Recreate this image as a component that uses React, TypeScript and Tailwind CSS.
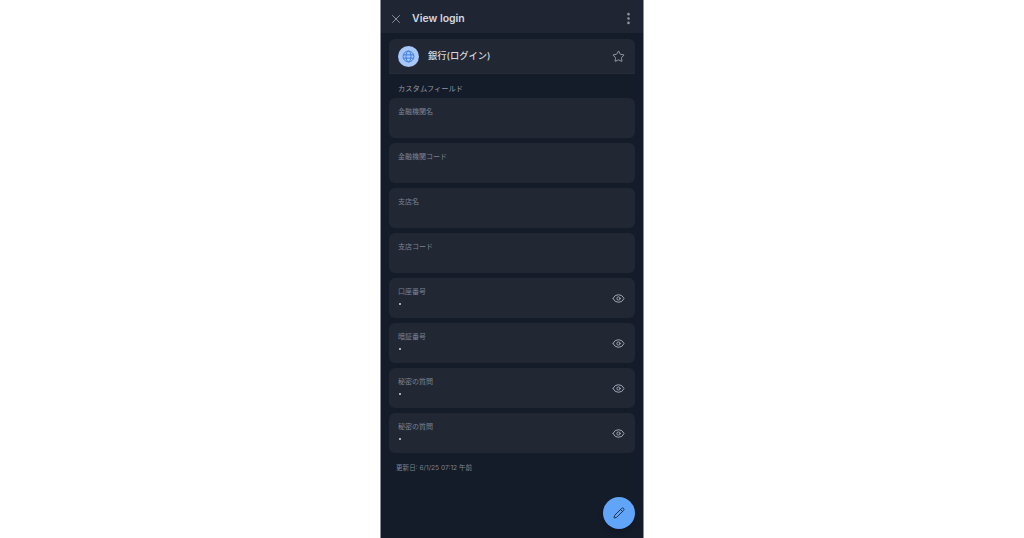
import { Eye, MoreVertical, Pencil, Star, X } from "lucide-react";

const plainFields = ["金融機関名", "金融機関コード", "支店名", "支店コード"];
const secretFields = ["口座番号", "暗証番号", "秘密の質問", "秘密の質問"];

function GlobeBadge() {
  return (
    <div className="w-[21px] h-[21px] rounded-full bg-[#a8c7fa] flex items-center justify-center shrink-0">
      <svg width="13" height="13" viewBox="0 0 24 24" fill="none" stroke="#3b7ae0" strokeWidth="1.8">
        <circle cx="12" cy="12" r="10" />
        <ellipse cx="12" cy="12" rx="4.5" ry="10" />
        <path d="M2.5 9h19M2.5 15h19" />
      </svg>
    </div>
  );
}

function Field({ label, secret }: { label: string; secret?: boolean }) {
  return (
    <div className="h-10 rounded-md bg-[#212733] flex items-center justify-between pl-[9px] pr-[10px]">
      <div className="self-start pt-[9px] flex flex-col">
        <span className="text-[7px] leading-[10px] text-[#7b8494]">{label}</span>
        {secret && <span className="mt-[6px] w-[2px] h-[2px] ml-[1px] rounded-full bg-[#d5d8de]" />}
      </div>
      {secret && <Eye className="w-[13px] h-[13px] mt-[1px] text-[#a3abb8]" strokeWidth={1.8} />}
    </div>
  );
}

export default function App() {
  return (
    <div
      className="h-[538px] w-full bg-white flex justify-center overflow-hidden"
      style={{ fontFamily: '"Inter", "Noto Sans CJK JP", sans-serif' }}
    >
      <div className="w-[264px] h-full flex flex-col bg-[#141b29] border-x border-[#8b909a]">
        <div className="h-[33px] shrink-0 pt-[4px] bg-[#1f2533] flex items-center pl-2 pr-[7px]">
          <X className="w-[14px] h-[14px] text-[#8f97a5]" strokeWidth={1.6} />
          <span className="ml-[9px] text-[10.5px] font-semibold text-[#d5d8de]">View login</span>
          <MoreVertical className="ml-auto w-[15px] h-[15px] text-[#8f97a5]" strokeWidth={2.2} />
        </div>

        <div className="px-2 pt-[6px] flex flex-col">
          <div className="h-[35px] rounded-t-md bg-[#212733] border-b border-[#252b37] flex items-center pl-[9px] pr-[10px]">
            <GlobeBadge />
            <span className="ml-[9px] text-[9.25px] font-medium text-[#d5d8de]">銀行(ログイン)</span>
            <Star className="ml-auto w-[13px] h-[13px] text-[#a3abb8]" strokeWidth={1.6} />
          </div>

          <div className="h-6 flex items-center pl-[9px] pt-[6px] text-[7.3px] text-[#8f97a5]">
            カスタムフィールド
          </div>

          <div className="flex flex-col gap-[5px]">
            {plainFields.map((f) => (
              <Field key={f} label={f} />
            ))}
            {secretFields.map((f, i) => (
              <Field key={i} label={f} secret />
            ))}
          </div>

          <div className="mt-[10px] pl-[7px] text-[6.6px] leading-[10px] text-[#7b8494]">更新日: 6/1/25 07:12 午前</div>
        </div>

        <div className="mt-auto mb-[9px] mr-2 self-end w-8 h-8 rounded-full bg-[#60a5fa] flex items-center justify-center shadow-md">
          <Pencil className="w-[12px] h-[12px] text-[#1c2433]" strokeWidth={1.8} />
        </div>
      </div>
    </div>
  );
}
